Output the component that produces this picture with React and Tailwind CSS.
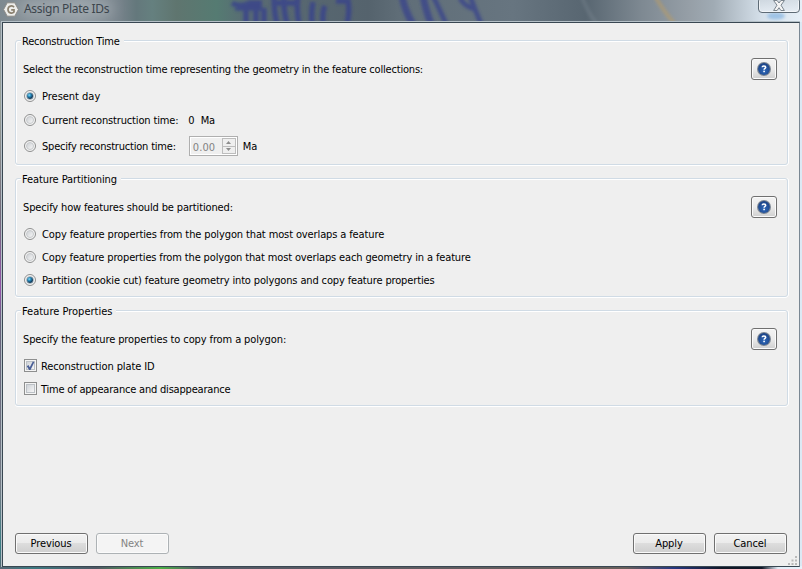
import React from "react";

function Label({ children, className = "" }) {
  return <span className={`whitespace-nowrap leading-[14px] ${className}`}>{children}</span>;
}

function Group({ title, className = "", titleClass = "", children }) {
  return (
    <section
      className={`-mr-px flex rounded-[3px] border border-[#d0dbe5] shadow-[inset_1px_1px_0_#fff,0_1px_0_#fff,1px_0_0_#fff] ${className}`}
    >
      <div className="flex flex-1 flex-col">
        <div className={`-mt-[6px] ml-[5px] h-[14px] w-fit bg-[#efefef] px-[1px] pr-[4px] leading-[14px] whitespace-nowrap ${titleClass}`}>
          {title}
        </div>
        <div className="flex flex-col pl-[7px]">{children}</div>
      </div>
      <HelpButton />
    </section>
  );
}

function HelpButton() {
  return (
    <button className="mt-[17px] mr-[10px] flex h-[22px] w-[26px] items-center justify-center rounded-[3px] border border-[#707070] bg-linear-to-b from-[#f3f3f3] from-0% via-[#ebebeb] via-50% to-[#cfcfcf] shadow-[inset_0_0_0_1px_#fbfbfb]">
      <svg width="14" height="14" viewBox="0 0 14 14">
        <defs>
          <radialGradient id="orb" cx="50%" cy="65%" r="60%">
            <stop offset="0" stopColor="#2e68b8" />
            <stop offset="1" stopColor="#1c4488" />
          </radialGradient>
        </defs>
        <circle cx="7" cy="7" r="7" fill="#7d8793" />
        <circle cx="7" cy="7" r="5.9" fill="url(#orb)" />
        <path d="M5.2 5.2C5.2 3.5 8.7 3.5 8.7 5.2C8.7 6.5 7.1 6.3 7.1 7.8" fill="none" stroke="#fff" strokeWidth="1.5" />
        <rect x="6.3" y="8.7" width="1.6" height="1.5" fill="#fff" />
      </svg>
    </button>
  );
}

function Radio({ checked }) {
  return (
    <span className="-mt-[2px] flex size-[12px] shrink-0 items-center justify-center rounded-full border border-[#8e8f8f] bg-[#f4f4f4]">
      {checked ? (
        <span className="flex size-[8px] items-center justify-center rounded-full border border-[#a9b5bd] bg-[radial-gradient(circle_at_38%_35%,#8fdcf5_0%,#2b8fc0_28%,#0d3657_65%)]" />
      ) : (
        <span className="size-[8px] rounded-full border border-[#c6c9cc] bg-linear-to-br from-[#ced1d5] to-[#f6f6f6]" />
      )}
    </span>
  );
}

function Check({ checked }) {
  return (
    <span className="-mt-[3px] flex size-[13px] shrink-0 items-center justify-center border border-[#8e8f8f] bg-[#f4f4f4]">
      <span className="flex size-[9px] items-center justify-center border border-[#bcc1c6] bg-linear-to-br from-[#cfd3d8] to-[#f6f6f6]">
        {checked && (
          <svg width="9" height="10" viewBox="0 0 9 10" className="shrink-0">
            <path d="M.8 5.2L2.4 4.1L3.8 6.2L6.8 0.6L8.4 1L4.5 9H3.1Z" fill="#4a5f97" />
          </svg>
        )}
      </span>
    </span>
  );
}

function Option({ checked, textClass = "", className = "", children, extra }) {
  return (
    <div className={`flex h-[14px] items-center pl-[1px] ${className}`}>
      <Radio checked={checked} />
      <Label className={`ml-[6px] ${textClass}`}>{children}</Label>
      {extra}
    </div>
  );
}

function DialogButton({ disabled, children }) {
  return (
    <button
      disabled={disabled}
      className={`flex h-[21px] w-[73px] items-center justify-center rounded-[3px] border pr-px pt-px leading-[14px] ${
        disabled
          ? "border-[#adb2b5] bg-[#f4f4f4] text-[#838383] shadow-[inset_0_0_0_1px_#fbfbfb]"
          : "border-[#707070] bg-[linear-gradient(#f2f2f2_0%,#ebebeb_49%,#dddddd_50%,#cfcfcf_100%)] shadow-[inset_0_0_0_1px_#fafafa]"
      }`}
    >
      {children}
    </button>
  );
}

function Spinner() {
  return (
    <span className="-mt-[2px] ml-[13px] flex h-[20px] w-[49px] shrink-0 border border-[#afafaf] p-[1px] text-[#838383] shadow-[inset_0_0_0_1px_#fff]">
      <span className="flex-1 pl-[2px] text-[11px] leading-[19px] tracking-[0.1px]">0.00</span>
      <span className="flex h-[16px] w-[14px] flex-col border border-[#bdbdbd]">
        <span className="flex flex-1 items-center justify-center border-b border-[#bdbdbd]">
          <svg width="5" height="3"><path d="M0 3L2.5 0L5 3Z" fill="#8c8c8c" /></svg>
        </span>
        <span className="flex flex-1 items-center justify-center">
          <svg width="5" height="3"><path d="M0 0L2.5 3L5 0Z" fill="#8c8c8c" /></svg>
        </span>
      </span>
    </span>
  );
}

function GlassBackdrop() {
  return (
    <svg className="absolute inset-0" width="802" height="569" viewBox="0 0 802 569">
      <defs>
        <linearGradient id="glass" x1="0" x2="1" y1="0" y2="0">
          <stop offset="0" stopColor="#7e8990" />
          <stop offset=".1" stopColor="#8d979f" />
          <stop offset=".15" stopColor="#76828a" />
          <stop offset=".17" stopColor="#64787c" />
          <stop offset=".19" stopColor="#65807f" />
          <stop offset=".22" stopColor="#5f756f" />
          <stop offset=".27" stopColor="#557b72" />
          <stop offset=".31" stopColor="#596a73" />
          <stop offset=".46" stopColor="#55636d" />
          <stop offset=".5" stopColor="#606e78" />
          <stop offset=".64" stopColor="#677580" />
          <stop offset=".73" stopColor="#586671" />
          <stop offset=".8" stopColor="#7e8992" />
          <stop offset=".86" stopColor="#969fa7" />
          <stop offset=".89" stopColor="#a0abb4" />
          <stop offset=".95" stopColor="#d5e0ea" />
          <stop offset="1" stopColor="#e6eff7" />
        </linearGradient>
        <linearGradient id="side" x1="0" x2="0" y1="0" y2="1">
          <stop offset="0" stopColor="#8a949a" />
          <stop offset=".15" stopColor="#99a198" />
          <stop offset=".35" stopColor="#716a79" />
          <stop offset=".49" stopColor="#9252a8" />
          <stop offset=".55" stopColor="#65607a" />
          <stop offset=".85" stopColor="#747b85" />
          <stop offset=".96" stopColor="#397d84" />
          <stop offset="1" stopColor="#566670" />
        </linearGradient>
        <linearGradient id="base" x1="0" x2="1" y1="0" y2="0">
          <stop offset="0" stopColor="#596976" />
          <stop offset=".04" stopColor="#3d7880" />
          <stop offset=".12" stopColor="#505864" />
          <stop offset=".2" stopColor="#4caf46" />
          <stop offset=".25" stopColor="#545967" />
          <stop offset=".78" stopColor="#69605c" />
          <stop offset=".84" stopColor="#26377f" />
          <stop offset=".9" stopColor="#111827" />
          <stop offset=".95" stopColor="#101827" />
          <stop offset=".97" stopColor="#e2edf7" />
          <stop offset="1" stopColor="#e7f1fa" />
        </linearGradient>
        <filter id="soft" filterUnits="userSpaceOnUse" x="0" y="-20" width="802" height="70"><feGaussianBlur stdDeviation="1.8" /></filter>
        <filter id="glow" x="-30%" y="-100%" width="160%" height="300%"><feGaussianBlur stdDeviation="7" /></filter>
      </defs>
      <rect width="802" height="24" fill="url(#glass)" />
      <rect y="22" width="3" height="547" fill="url(#side)" />
      <rect x="799" y="22" width="3" height="547" fill="#dce9f4" />
      <rect y="566" width="802" height="3" fill="url(#base)" />
      <rect x="20" y="1" width="92" height="16" fill="#b0b7bc" opacity=".6" filter="url(#glow)" />
      <g filter="url(#soft)" fill="none" stroke="#37438c" strokeWidth="5.5" opacity=".8">
        <path d="M232 3Q240 8 250 3H262M235 8H262M246 7V24M256 4V24M264 8V24M274 -4Q274 12 277 24M284 -4Q283 8 287 24M298 -4Q296 8 299 24M313 2Q311 12 312 24M325 6Q322 12 323 24M274 3H298M336 1H348Q350 12 347 24" />
      </g>
      <g filter="url(#soft)" fill="none" stroke="#37438c" strokeWidth="7" opacity=".75">
        <path d="M402 -4Q405 12 414 26M423 -4Q426 12 432 26" />
        <path d="M433 -4Q440 10 447 26M460 -2Q464 6 474 9M470 -4Q475 10 482 26" strokeWidth="5" />
      </g>
      <path d="M655 -4Q664 12 675 24" fill="none" stroke="#b39b6d" strokeWidth="4" opacity=".65" filter="url(#soft)" />
      <path d="M582 -4Q586 10 597 24" fill="none" stroke="#84909a" strokeWidth="4" opacity=".3" filter="url(#soft)" />
      <ellipse cx="776" cy="16" rx="9" ry="3.5" fill="#98bfe5" opacity=".9" filter="url(#soft)" />
    </svg>
  );
}

export default function App() {
  return (
    <div className="relative h-[569px] w-[802px] overflow-hidden font-['DejaVu_Sans_Condensed','DejaVu_Sans',sans-serif] text-[11px] tracking-[-0.1px] text-black [font-stretch:condensed]">
      <GlassBackdrop />
      <div className="relative flex h-full flex-col">
        <header className="flex h-[21px] shrink-0 items-start">
          <svg className="mt-[2px] ml-[3px]" width="16" height="15" viewBox="0 0 16 15">
            <path d="M4.2 .8H11.8L15.4 7.5L11.8 14.2H4.2L.6 7.5Z" fill="#eeeeec" stroke="#8c8a86" />
            <path d="M11 5.2C9.7 3.2 5 3.4 5 7.5C5 11.5 9.4 11.8 11 10V7.8H8.2" fill="none" stroke="#8b8170" strokeWidth="1.7" />
          </svg>
          <h1 className="ml-[5px] font-['Noto_Sans',sans-serif] text-[12px] leading-[17px] tracking-[-0.3px] text-[#3c454d] [font-stretch:normal]">
            Assign Plate IDs
          </h1>
          <button className="-mt-[3px] mr-[2px] ml-auto flex h-[16px] w-[42px] items-center justify-center rounded-[4px] border border-[#5e6b76] bg-linear-to-b from-[#c3cbd2]/50 to-[#e8eef4]/70 shadow-[inset_0_0_0_1px_#ffffff90]">
            <svg width="12" height="11" viewBox="0 0 12 11">
              <path d="M.6 .5H4.1L6 3L7.9 .5H11.4L8 5.2L11.4 10.5H7.9L6 7.7L4.1 10.5H.6L4 5.2Z" fill="#f4f4f4" stroke="#7b858e" />
            </svg>
          </button>
        </header>
        <main className="mr-[2px] mb-[2px] ml-[1px] flex flex-1 border-t border-l border-[#b5c0c7]">
          <div className="flex flex-1 flex-col border border-[#394752] border-r-[#7a8793] bg-[#efefef] px-[12px] pt-[17px]">
            <Group title="Reconstruction Time" className="h-[125px]" titleClass="tracking-[-0.2px]">
              <Label className="mt-[14px] tracking-[-0.19px]">Select the reconstruction time representing the geometry in the feature collections:</Label>
              <Option checked className="mt-[13px]" textClass="tracking-[-0.02px]">Present day</Option>
              <Option className="mt-[10px]" textClass="tracking-[-0.15px]" extra={<Label className="ml-[10px] whitespace-pre">0  Ma</Label>}>Current reconstruction time:</Option>
              <Option className="mt-[12px]" textClass="tracking-[-0.2px]" extra={<><Spinner /><Label className="ml-[5px]">Ma</Label></>}>Specify reconstruction time:</Option>
            </Group>
            <Group title="Feature Partitioning" className="mt-[13px] h-[119px]">
              <Label className="mt-[14px] tracking-[-0.14px]">Specify how features should be partitioned:</Label>
              <Option className="mt-[13px]" textClass="tracking-[-0.12px]">Copy feature properties from the polygon that most overlaps a feature</Option>
              <Option className="mt-[9px]" textClass="tracking-[-0.14px]">Copy feature properties from the polygon that most overlaps each geometry in a feature</Option>
              <Option checked className="mt-[9px]" textClass="tracking-[-0.14px]">Partition (cookie cut) feature geometry into polygons and copy feature properties</Option>
            </Group>
            <Group title="Feature Properties" className="mt-[13px] h-[96px]" titleClass="tracking-normal">
              <Label className="mt-[14px] tracking-[-0.11px]">Specify the feature properties to copy from a polygon:</Label>
              <div className="mt-[13px] flex h-[14px] items-center pl-[1px]">
                <Check checked />
                <Label className="ml-[4px]">Reconstruction plate ID</Label>
              </div>
              <div className="mt-[9px] flex h-[14px] items-center pl-[1px]">
                <Check />
                <Label className="ml-[4px] tracking-[-0.2px]">Time of appearance and disappearance</Label>
              </div>
            </Group>
            <footer className="mt-auto mb-[12px] flex gap-[8px]">
              <DialogButton>Previous</DialogButton>
              <DialogButton disabled>Next</DialogButton>
              <span className="flex-1" />
              <DialogButton>Apply</DialogButton>
              <DialogButton>Cancel</DialogButton>
            </footer>
          </div>
        </main>
        <svg className="absolute right-[5px] bottom-[4px]" width="9" height="9" fill="#b9b9b9">
          <path d="M7 0h2v2h-2zM3.5 3.5h2v2h-2zM7 3.5h2v2h-2zM0 7h2v2h-2zM3.5 7h2v2h-2zM7 7h2v2h-2z" />
        </svg>
      </div>
    </div>
  );
}
